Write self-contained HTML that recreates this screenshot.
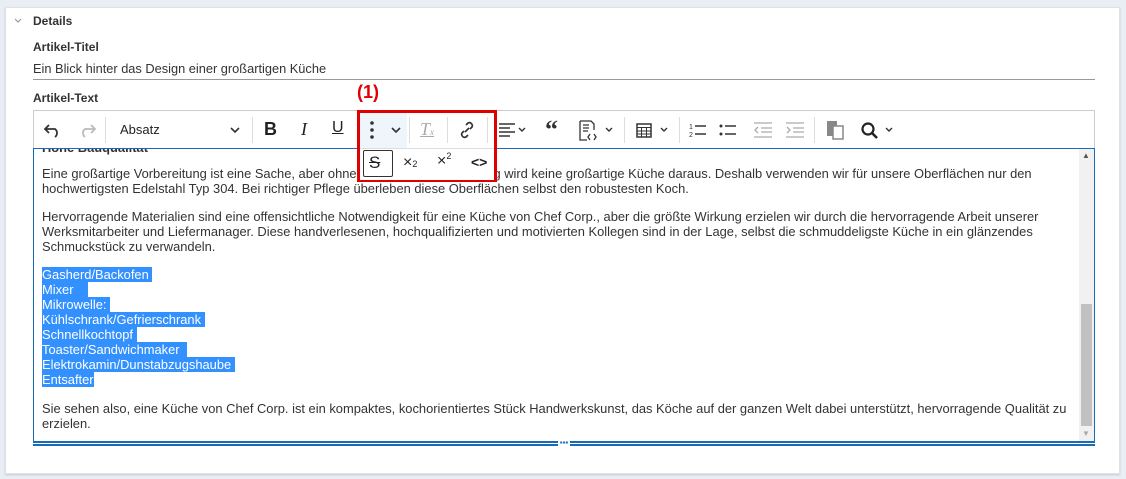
<!DOCTYPE html>
<html><head><meta charset="utf-8"><style>
*{box-sizing:border-box;margin:0;padding:0}
body{width:1126px;height:479px;background:#e9eef4;font-family:"Liberation Sans",sans-serif;color:#333;position:relative;overflow:hidden}
.card{position:absolute;left:5px;top:7px;width:1115px;height:467px;background:#fff;border:1px solid #dfe3e8;box-shadow:0 1px 2px rgba(0,0,0,.15)}
.abs{position:absolute;white-space:nowrap}
.lbl{font-weight:bold;font-size:12px;color:#333}
.tb{position:absolute;left:33px;top:110px;width:1062px;height:39px;border:1px solid #ccc;border-bottom:none;background:#fff}
.ed{position:absolute;left:33px;top:148px;width:1062px;height:296px;border:1px solid #1a6bb5;background:#fff;overflow:hidden}
.t{position:absolute;left:8px;font-size:12.9px;line-height:15px;color:#333;white-space:nowrap;letter-spacing:0}
.sel{background:#3390ff;color:#fff}
.sb{position:absolute;right:0;top:0;width:15px;height:294px;background:#f1f1f1}
.sep{position:absolute;top:6px;width:1px;height:26px;background:#ddd}
.ch{position:absolute;top:16px}
</style></head><body>
<div class="card"></div>
<svg class="abs" style="left:14px;top:18px" width="8" height="5" viewBox="0 0 8 5"><path d="M1 1l3 3 3-3" fill="none" stroke="#999" stroke-width="1.2"/></svg>
<div class="abs lbl" style="left:33px;top:14px">Details</div>
<div class="abs lbl" style="left:33px;top:40px">Artikel-Titel</div>
<div class="abs" style="left:33px;top:61px;font-size:12.8px;color:#333">Ein Blick hinter das Design einer großartigen Küche</div>
<div class="abs" style="left:33px;top:79px;width:1062px;height:1px;background:#999"></div>
<div class="abs lbl" style="left:33px;top:91px">Artikel-Text</div>

<div class="tb">
<svg class="abs" style="left:10px;top:11px" width="18" height="16" viewBox="0 0 18 16"><path d="M5 3L1 7l4 4M1 7h10a5 5 0 010 8" fill="none" stroke="#333" stroke-width="1.8"/></svg>
<svg class="abs" style="left:44px;top:11px" width="18" height="16" viewBox="0 0 18 16"><path d="M13 3l4 4-4 4M17 7H7a5 5 0 000 8" fill="none" stroke="#bbb" stroke-width="1.8"/></svg>
<div class="sep" style="left:71px"></div>
<div class="abs" style="left:86px;top:11px;font-size:13px;color:#222">Absatz</div>
<svg class="ch" style="left:196px" width="10" height="6" viewBox="0 0 10 6"><path d="M1 1l4 4 4-4" fill="none" stroke="#333" stroke-width="1.6"/></svg>
<div class="sep" style="left:218px"></div>
<div class="abs" style="left:230px;top:8px;font-size:18px;font-weight:bold;color:#222">B</div>
<div class="abs" style="left:267px;top:8px;font-size:18px;font-style:italic;font-family:'Liberation Serif',serif;color:#222">I</div>
<div class="abs" style="left:298px;top:8px;font-size:16px;text-decoration:underline;color:#222">U</div>
<div class="abs" style="left:326px;top:0;width:47px;height:38px;background:#eef5fb"></div>
<svg class="abs" style="left:336px;top:10px" width="4" height="18" viewBox="0 0 4 18"><circle cx="2" cy="2" r="1.8" fill="#333"/><circle cx="2" cy="9" r="1.8" fill="#333"/><circle cx="2" cy="16" r="1.8" fill="#333"/></svg>
<svg class="ch" style="left:357px" width="10" height="6" viewBox="0 0 10 6"><path d="M1 1l4 4 4-4" fill="none" stroke="#333" stroke-width="1.6"/></svg>
<div class="sep" style="left:375px"></div>
<div class="abs" style="left:386px;top:8px;font-size:18px;font-style:italic;font-family:'Liberation Serif',serif;color:#aaa;text-decoration:underline">T<span style="font-size:9px">x</span></div>
<div class="sep" style="left:413px"></div>
<svg class="abs" style="left:424px;top:10px" width="18" height="18" viewBox="0 0 18 18"><path d="M7 11l4-4M8 4l2-2a3 3 0 014 4l-2 2M10 14l-2 2a3 3 0 01-4-4l2-2" fill="none" stroke="#333" stroke-width="1.7"/></svg>
<div class="sep" style="left:453px"></div>
<svg class="abs" style="left:465px;top:12px" width="16" height="14" viewBox="0 0 16 14"><path d="M0 1h16M0 5h11M0 9h16M0 13h11" stroke="#333" stroke-width="1.5"/></svg>
<svg class="ch" style="left:484px" width="8" height="5" viewBox="0 0 8 5"><path d="M1 1l3 3 3-3" fill="none" stroke="#333" stroke-width="1.4"/></svg>
<div class="abs" style="left:511px;top:4px;font-size:26px;font-weight:bold;font-family:'Liberation Serif',serif">&#8220;</div>
<svg class="abs" style="left:545px;top:9px" width="20" height="22" viewBox="0 0 20 22"><path d="M1 1h11l3 3v6M1 1v19h7M4 5h6M4 8h6M4 11h5M11 14l-2 3 2 3M15 14l2 3-2 3" fill="none" stroke="#333" stroke-width="1.3"/></svg>
<svg class="ch" style="left:571px" width="8" height="5" viewBox="0 0 8 5"><path d="M1 1l3 3 3-3" fill="none" stroke="#333" stroke-width="1.4"/></svg>
<div class="sep" style="left:590px"></div>
<svg class="abs" style="left:602px;top:12px" width="16" height="15" viewBox="0 0 16 15"><rect x="1" y="1" width="14" height="13" fill="none" stroke="#333" stroke-width="1.5"/><path d="M1 4.5h14M1 8h14M1 11h14M5.5 4v10M10.5 4v10" stroke="#333" stroke-width="1"/></svg>
<svg class="ch" style="left:626px" width="8" height="5" viewBox="0 0 8 5"><path d="M1 1l3 3 3-3" fill="none" stroke="#333" stroke-width="1.4"/></svg>
<div class="sep" style="left:645px"></div>
<svg class="abs" style="left:655px;top:11px" width="18" height="16" viewBox="0 0 18 16"><text x="0" y="7" font-size="7" fill="#333" font-family="Liberation Sans">1</text><text x="0" y="15" font-size="7" fill="#333" font-family="Liberation Sans">2</text><path d="M6 4h11M6 12h11" stroke="#333" stroke-width="1.5"/></svg>
<svg class="abs" style="left:685px;top:11px" width="18" height="16" viewBox="0 0 18 16"><circle cx="2" cy="4" r="1.5" fill="#333"/><circle cx="2" cy="12" r="1.5" fill="#333"/><path d="M6 4h11M6 12h11" stroke="#333" stroke-width="1.5"/></svg>
<svg class="abs" style="left:720px;top:11px" width="18" height="16" viewBox="0 0 18 16"><path d="M0 1h18M7 6h11M7 10h11M0 15h18M4 5L1 8l3 3" fill="none" stroke="#aaa" stroke-width="1.3"/></svg>
<svg class="abs" style="left:752px;top:11px" width="18" height="16" viewBox="0 0 18 16"><path d="M0 1h18M7 6h11M7 10h11M0 15h18M1 5l3 3-3 3" fill="none" stroke="#aaa" stroke-width="1.3"/></svg>
<div class="sep" style="left:780px"></div>
<svg class="abs" style="left:792px;top:9px" width="18" height="20" viewBox="0 0 18 20"><rect x="1" y="1" width="10" height="15" fill="#888"/><rect x="7" y="6" width="10" height="13" fill="#fff" stroke="#888" stroke-width="1.5"/></svg>
<svg class="abs" style="left:826px;top:10px" width="20" height="20" viewBox="0 0 20 20"><circle cx="8" cy="8" r="5.5" fill="none" stroke="#222" stroke-width="2.2"/><path d="M12 12l5 5" stroke="#222" stroke-width="2.6"/></svg>
<svg class="ch" style="left:851px" width="8" height="5" viewBox="0 0 8 5"><path d="M1 1l3 3 3-3" fill="none" stroke="#333" stroke-width="1.4"/></svg>
</div>

<div class="ed">
<div class="t" style="top:-9px;font-weight:bold">Hohe Bauqualität</div>
<div class="t" style="top:17px">Eine großartige Vorbereitung ist eine Sache, aber ohne hochwertige Ausstattung wird keine großartige Küche daraus. Deshalb verwenden wir für unsere Oberflächen nur den<br>hochwertigsten Edelstahl Typ 304. Bei richtiger Pflege überleben diese Oberflächen selbst den robustesten Koch.</div>
<div class="t" style="top:60px">Hervorragende Materialien sind eine offensichtliche Notwendigkeit für eine Küche von Chef Corp., aber die größte Wirkung erzielen wir durch die hervorragende Arbeit unserer<br>Werksmitarbeiter und Liefermanager. Diese handverlesenen, hochqualifizierten und motivierten Kollegen sind in der Lage, selbst die schmuddeligste Küche in ein glänzendes<br>Schmuckstück zu verwandeln.</div>
<div class="t" style="top:118px"><span class="sel">Gasherd/Backofen&nbsp;</span><br><span class="sel">Mixer&nbsp;&nbsp;&nbsp;&nbsp;</span><br><span class="sel">Mikrowelle:&nbsp;</span><br><span class="sel">Kühlschrank/Gefrierschrank&nbsp;</span><br><span class="sel">Schnellkochtopf&nbsp;</span><br><span class="sel">Toaster/Sandwichmaker&nbsp;&nbsp;</span><br><span class="sel">Elektrokamin/Dunstabzugshaube&nbsp;</span><br><span class="sel">Entsafter</span></div>
<div class="t" style="top:252px">Sie sehen also, eine Küche von Chef Corp. ist ein kompaktes, kochorientiertes Stück Handwerkskunst, das Köche auf der ganzen Welt dabei unterstützt, hervorragende Qualität zu<br>erzielen.</div>
<div class="sb"><div style="position:absolute;left:2px;top:155px;width:11px;height:122px;background:#c1c1c1"></div>
<div class="abs" style="left:3px;top:2px;font-size:8px;color:#555">&#9650;</div>
<div class="abs" style="left:3px;top:280px;font-size:8px;color:#aaa">&#9660;</div></div>
</div>
<div class="abs" style="left:33px;top:441px;width:1062px;height:5px;border-top:2px solid #1a6bb5;border-bottom:2px solid #1a6bb5;background:#fff"></div>
<div class="abs" style="left:558px;top:440px;width:12px;height:7px;background:#fff;font-size:8px;line-height:6px;color:#1a6bb5;text-align:center">▪▪▪</div>

<div class="abs" style="left:357px;top:110px;width:140px;height:72px;border:3px solid #e00000;background:transparent"></div>
<div class="abs" style="left:360px;top:148px;width:134px;height:32px;background:#fff;border-top:1px solid #ddd"></div>
<div class="abs" style="left:363px;top:150px;width:30px;height:27px;border:1px solid #333;border-radius:2px"></div>
<div class="abs" style="left:369px;top:153px;font-size:17px;color:#222;text-decoration:line-through">S</div>
<div class="abs" style="left:403px;top:154px;font-size:16px;color:#222">×<span style="font-size:9px">2</span></div>
<div class="abs" style="left:437px;top:151px;font-size:16px;color:#222">×<sup style="font-size:9px">2</sup></div>
<div class="abs" style="left:471px;top:154px;font-size:14px;color:#222;font-weight:bold">&lt;&gt;</div>
<div class="abs" style="left:357px;top:82px;font-size:18px;font-weight:bold;color:#e00000">(1)</div>
</body></html>
